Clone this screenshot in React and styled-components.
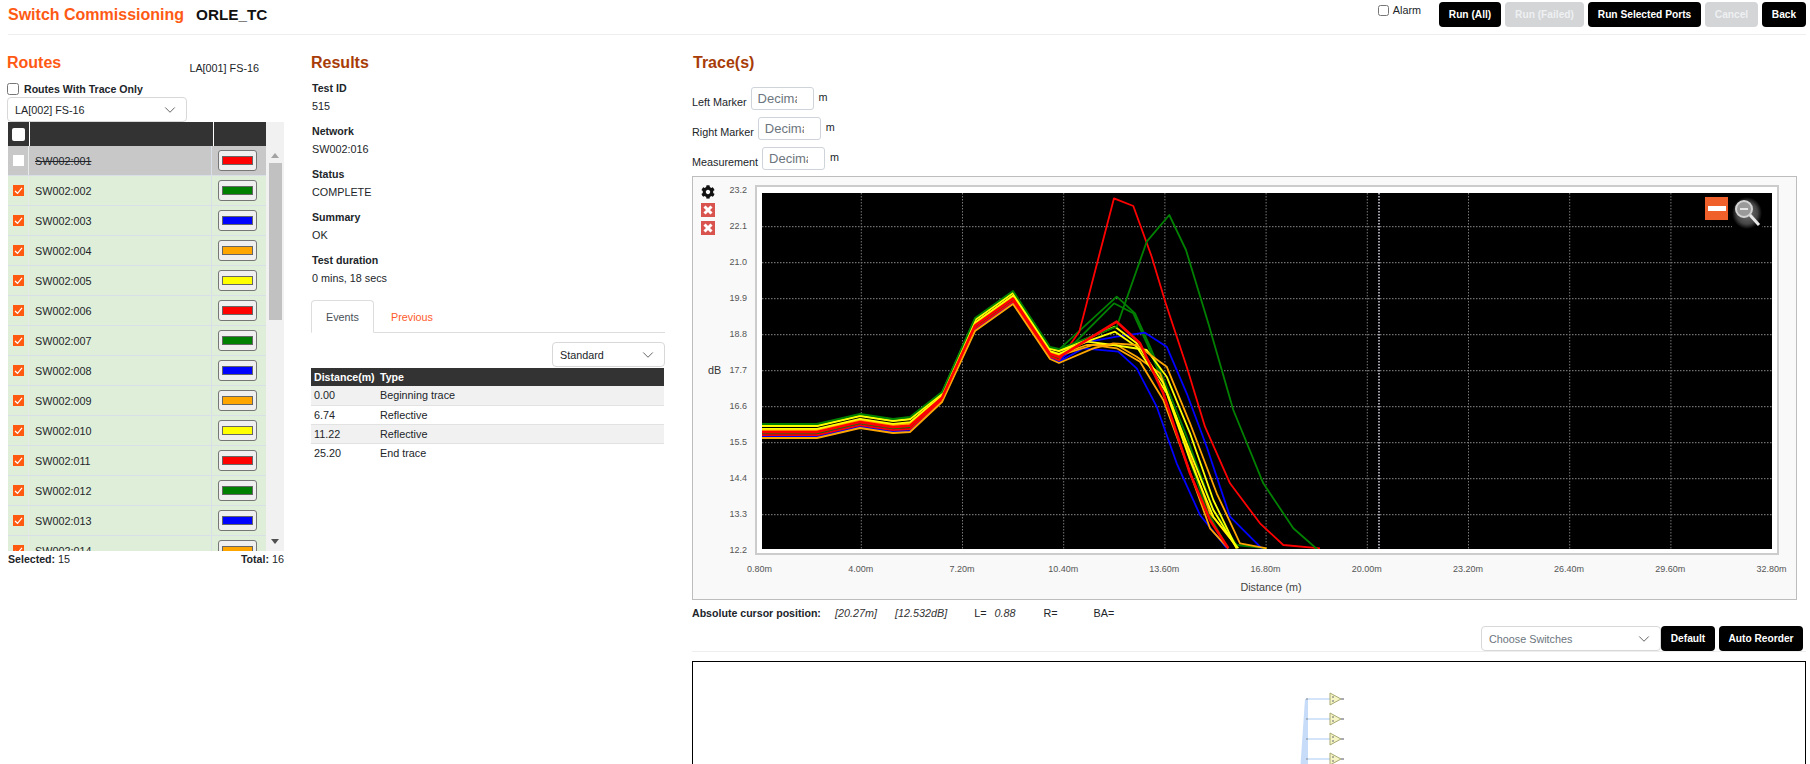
import React from 'react'
import styled, { createGlobalStyle } from 'styled-components'
import { ChevronDown } from 'lucide-react'
import { FaCog } from 'react-icons/fa'

const GlobalStyle = createGlobalStyle`
  html, body {
    margin: 0;
    height: 100%;
    overflow: hidden;
    background: #fff;
  }
  body {
    font-family: "Liberation Sans", Arial, sans-serif;
    font-size: 10.8px;
    color: #212529;
  }
  * {
    box-sizing: border-box;
  }
`

const COLORS = ['#ff0000', '#008000', '#0000ff', '#ffa500', '#ffff00']

const routes = Array.from({ length: 14 }, (_, idx) => ({
  name: `SW002:${String(idx + 1).padStart(3, '0')}`,
  color: COLORS[idx % 5],
  off: idx === 0,
}))

const results = [
  ['Test ID', '515'],
  ['Network', 'SW002:016'],
  ['Status', 'COMPLETE'],
  ['Summary', 'OK'],
  ['Test duration', '0 mins, 18 secs'],
]

const events = [
  ['0.00', 'Beginning trace'],
  ['6.74', 'Reflective'],
  ['11.22', 'Reflective'],
  ['25.20', 'End trace'],
]

const Y_TICKS = ['23.2', '22.1', '21.0', '19.9', '18.8', '17.7', '16.6', '15.5', '14.4', '13.3', '12.2']
const X_TICKS = ['0.80m', '4.00m', '7.20m', '10.40m', '13.60m', '16.80m', '20.00m', '23.20m', '26.40m', '29.60m', '32.80m']

// shared first part of every trace: x, lowest y, highest y (plot coordinates)
const HEAD = [
  [0, 245, 231],
  [55, 245, 231],
  [98, 235, 221],
  [131, 240, 226],
  [148, 239, 224],
  [180, 209, 199],
  [213, 138, 125],
  [251, 111, 98],
  [288, 166, 154],
  [297, 170, 156],
]

const traces = [
  { color: '#008000', lift: 0.95, width: 1.8, tail: [[470, 350], [525, 400], [570, 500], [620, 620], [680, 770], [760, 990], [830, 1095], [920, 1105]] },
  { color: '#008000', lift: 0.32, width: 1.8, tail: [[462, 370], [520, 400], [565, 500], [610, 610], [660, 750], [740, 990], [800, 1100]] },
  { color: '#0000ff', lift: 0.18, width: 1.8, tail: [[360, 490], [470, 470], [555, 458], [620, 500], [680, 640], [740, 800], [810, 1010], [905, 1105]] },
  { color: '#0000ff', lift: 0.08, width: 1.8, tail: [[370, 505], [475, 515], [530, 565], [590, 680], [650, 850], [720, 1005], [800, 1105]] },
  { color: '#ff0000', lift: 0.2, width: 1.8, tail: [[358, 455], [462, 55], [520, 78], [575, 230], [617, 370], [680, 560], [735, 740], [810, 910], [900, 1030], [970, 1095], [1080, 1105]] },
  { color: '#ffa500', lift: 0.52, width: 1.8, tail: [[400, 495], [470, 505], [540, 545], [610, 660], [680, 850], [750, 1045], [805, 1105]] },
  { color: '#ffa500', lift: 0.6, width: 1.8, tail: [[380, 495], [470, 495], [530, 530], [600, 580], [670, 770], [750, 1000], [830, 1100]] },
  { color: '#ffff00', lift: 0.88, width: 1.8, tail: [[465, 440], [530, 490], [610, 610], [680, 790], [760, 990], [830, 1105]] },
  { color: '#ffff00', lift: 0.85, width: 1.8, tail: [[465, 455], [530, 500], [620, 640], [690, 840], [760, 1010], [835, 1105]] },
  { color: '#ffff00', lift: 0.66, width: 1.8, tail: [[380, 485], [460, 495], [560, 510], [620, 590], [690, 760], [760, 960], [830, 1105]] },
  { color: '#008000', lift: 1, width: 1.8, tail: [[470, 440], [560, 185], [628, 105], [678, 210], [745, 430], [820, 690], [910, 910], [1000, 1045], [1080, 1115]] },
  { color: '#ffa500', lift: 0, width: 1.8, tail: [[400, 505], [460, 490], [530, 495], [620, 560], [690, 730], [770, 940], [840, 1090], [920, 1105]] },
  { color: '#ff0000', lift: 0.42, width: 2.6, tail: [[470, 425], [540, 490], [610, 640], [690, 880], [750, 1020], [805, 1105]] },
]

const tracePoints = ({ lift, tail }) => {
  const head = HEAD.map(([x, low, high]) => `${x},${(low + (high - low) * lift).toFixed(1)}`)
  // tail values were read off a 3x crop of the plot
  const rest = tail.map(([x, y]) => `${(x / 3 + 198).toFixed(1)},${(y / 3 - 13).toFixed(1)}`)
  return [...head, ...rest].join(' ')
}

const Page = styled.div`
  width: 1810px;
  height: 764px;
  overflow: hidden;
`

const Header = styled.header`
  display: flex;
  justify-content: space-between;
  align-items: flex-start;
  height: 35px;
  margin: 0 4px 0 8px;
  border-bottom: 1px solid #eeeeee;
`

const TitleGroup = styled.div`
  display: flex;
  align-items: center;
  gap: 12px;
  height: 30px;
`

const Title = styled.h1`
  margin: 0;
  font-size: ${props => props.$accent ? 16 : 15.3}px;
  font-weight: 700;
  color: ${props => props.$accent ? '#ff5a14' : '#111'};
`

const Actions = styled.div`
  display: flex;
  align-items: flex-start;
  gap: 4px;
  padding-top: 2px;
`

const AlarmLabel = styled.label`
  display: flex;
  align-items: center;
  gap: 4px;
  margin-right: 14px;
  height: 16px;
`

const Check = styled.input.attrs({ type: 'checkbox', readOnly: true })`
  width: ${props => props.$size || 12}px;
  height: ${props => props.$size || 12}px;
  margin: 0;
`

const Button = styled.button`
  width: ${props => props.$width}px;
  height: 25px;
  padding: 0;
  border: 0;
  border-radius: 4px;
  font-family: inherit;
  font-size: 10.2px;
  font-weight: 700;
  color: ${props => props.disabled ? '#eef0f2' : '#fff'};
  background: ${props => props.disabled ? '#d3d5d7' : '#000'};
`

const Columns = styled.main`
  display: grid;
  grid-template-columns: 278px 355px 1114px;
  column-gap: 26px;
  padding: 17px 0 0 7px;
`

const Heading = styled.h2`
  margin: 0;
  height: 20px;
  line-height: 22px;
  font-size: 16px;
  font-weight: 700;
  color: ${props => props.$accent ? '#ff5a14' : '#a83c08'};
`

const TraceHeading = styled(Heading)`
  padding-left: 1px;
`

const RoutesTop = styled.div`
  display: flex;
  justify-content: space-between;
  align-items: flex-end;
  width: 252px;
`

const SmallNote = styled.span`
  line-height: 14px;
  margin-bottom: -3px;
`

const TraceOnly = styled.label`
  display: flex;
  align-items: center;
  gap: 5px;
  height: 14px;
  margin-top: 10px;
  font-size: 10.6px;
  font-weight: 700;
`

const SelectBox = styled.div`
  display: flex;
  align-items: center;
  justify-content: space-between;
  width: ${props => props.$width}px;
  height: 25px;
  padding: 0 7px;
  background: #fff;
  border: 1px solid #d8d8d8;
  border-radius: 4px;
  color: ${props => props.$muted ? '#6c757d' : '#212529'};

  svg {
    color: #444;
  }
`

const RouteSelect = styled(SelectBox)`
  margin-top: 1px;
`

const ListFrame = styled.div`
  display: flex;
  height: 429px;
  width: 277px;
  padding-left: 1px;
  overflow: hidden;
  background: #fff;
`

const RouteTable = styled.div`
  width: 258px;
  display: flex;
  flex-direction: column;
  flex-shrink: 0;
`

const RouteHead = styled.div`
  display: grid;
  grid-template-columns: 21px 183px 1fr;
  column-gap: 1px;
  height: 24px;
  flex-shrink: 0;
  background: #fff;

  > div {
    display: flex;
    align-items: center;
    justify-content: center;
    background: #333;
  }
`

const Row = styled.div`
  display: grid;
  grid-template-columns: 21px 183px 1fr;
  height: 30px;
  flex-shrink: 0;
  align-items: center;
  background: ${props => props.$off ? '#c8c8c8' : '#dfeed8'};
  border-bottom: 1px solid #d9dfe6;
`

const BoxCell = styled.div`
  height: 100%;
  display: flex;
  align-items: center;
  justify-content: center;
  border-right: 1px solid #e6eae8;
`

const NameCell = styled.div`
  height: 100%;
  display: flex;
  align-items: center;
  padding-left: 6px;
  text-decoration: ${props => props.$off ? 'line-through' : 'none'};
  border-right: 1px solid #d9dfe6;
`

const ColorCell = styled.div`
  display: flex;
  padding-left: 6px;
`

const MarkBox = styled.span`
  display: flex;
  align-items: center;
  justify-content: center;
  width: ${props => props.$size || 11}px;
  height: ${props => props.$size || 11}px;
  border-radius: ${props => props.$size ? 2 : 0}px;
  background: ${props => props.$on ? '#ff5a10' : '#fff'};
`

const ColorButton = styled.div`
  display: flex;
  align-items: center;
  justify-content: center;
  width: 39px;
  height: 21px;
  background: #efefef;
  border: 1px solid #767676;
  border-radius: 3px;
`

const Swatch = styled.span`
  display: block;
  width: 31px;
  height: 9px;
  border: 1px solid #666;
  background: ${props => props.$color};
`

const ScrollTrack = styled.div`
  display: flex;
  flex-direction: column;
  align-items: center;
  width: 18px;
  background: #f1f1f1;
`

const Arrow = styled.span`
  width: 0;
  height: 0;
  border-left: 4px solid transparent;
  border-right: 4px solid transparent;
  ${props => props.$down
    ? 'border-top: 5px solid #505050; margin-top: auto; margin-bottom: 7px;'
    : 'border-bottom: 5px solid #a3a3a3; margin-top: 31px;'}
`

const Thumb = styled.span`
  width: 13px;
  height: 157px;
  margin-top: 5px;
  background: #c1c1c1;
`

const RouteFooter = styled.div`
  display: flex;
  justify-content: space-between;
  width: 277px;
  margin-top: 1px;
  padding-left: 1px;
  line-height: 14px;

  b {
    font-size: 10.6px;
    font-weight: 700;
  }
`

const ResultList = styled.div`
  margin-top: 7px;
  padding-left: 1px;
`

const ResultItem = styled.div`
  margin-bottom: 7px;

  b, span {
    display: block;
    height: 18px;
    line-height: 18px;
  }
  b {
    font-size: 10.6px;
    font-weight: 700;
  }
`

const Tabs = styled.div`
  display: flex;
  align-items: stretch;
  width: 354px;
  height: 33px;
  margin-top: 13px;
  border-bottom: 1px solid #ddd;
`

const Tab = styled.div`
  display: flex;
  align-items: center;
  justify-content: ${props => props.$active ? 'center' : 'flex-start'};
  width: ${props => props.$active ? '63px' : '79px'};
  height: 33px;
  padding-left: ${props => props.$active ? 0 : '17px'};
  border: ${props => props.$active ? '1px solid #ddd' : '0'};
  border-bottom: ${props => props.$active ? '1px solid #fff' : '0'};
  border-radius: 4px 4px 0 0;
  color: ${props => props.$active ? '#495057' : '#ff5a2a'};
`

const RightRow = styled.div`
  display: flex;
  justify-content: flex-end;
  width: 354px;
  margin-top: 9px;
`

const EventTable = styled.table`
  width: 353px;
  margin-top: 1px;
  border-collapse: collapse;
  table-layout: fixed;
  font-size: 10.8px;

  th {
    height: 18px;
    padding: 0 3px;
    text-align: left;
    font-size: 10.6px;
    font-weight: 700;
    white-space: nowrap;
    color: #fff;
    background: #333;
  }
  th:first-child {
    width: 66px;
  }
  td {
    height: 19px;
    padding: 0 3px;
    border-bottom: 1px solid #e2e2e2;
  }
  tr:nth-child(odd) td {
    background: #f1f1f1;
  }
  tr:last-child td {
    border-bottom: 0;
  }
`

const MarkerRow = styled.div`
  display: flex;
  align-items: center;
  gap: 4px;
  height: 23px;
  margin-top: ${props => props.$first ? 15 : 7}px;

  > span:first-child {
    padding-top: 7px;
  }
  > span:last-child {
    padding-bottom: 4px;
    margin-left: 1px;
  }
`

const MarkerInput = styled.input`
  width: 63px;
  height: 23px;
  padding: 0 16px 0 6px;
  border: 1px solid #ced4da;
  border-radius: 3px;
  font-family: inherit;
  font-size: 13px;
  outline: none;

  &::placeholder {
    color: #6c757d;
  }
`

const ChartPanel = styled.section`
  display: grid;
  grid-template-columns: 62px 1024px;
  grid-template-rows: 370px auto auto;
  width: 1105px;
  height: 424px;
  margin-top: 6px;
  padding-top: 8px;
  background: #f9f9f9;
  border: 1px solid #bdbdbd;
`

const ChartLeft = styled.div`
  display: flex;
`

const ToolCol = styled.div`
  display: flex;
  flex-direction: column;
  width: 15px;
  padding-left: 8px;
  gap: 4px;
  flex-shrink: 0;

  svg {
    display: block;
    flex-shrink: 0;
  }
`

const AxisY = styled.div`
  align-self: center;
  width: 14px;
  color: #333;
`

const Ticks = styled.div`
  display: flex;
  flex-direction: column;
  justify-content: space-between;
  align-items: flex-end;
  width: 24px;
  margin-left: auto;
  margin-right: 8px;
  font-size: 9px;
  line-height: 10px;
  color: #555;
`

const PlotFrame = styled.div`
  position: relative;
  padding: 6px 5px 4px;
  background: #fff;
  border: 2px solid #ccc;
`

const PlotSvg = styled.svg`
  display: block;
  width: 1010px;
  height: 356px;
  background: #000;
`

const ZoomTools = styled.div`
  position: absolute;
  top: 10px;
  right: 15px;
  display: flex;
  align-items: flex-start;
  gap: 4px;
`

const ZoomMinus = styled.div`
  display: flex;
  align-items: center;
  justify-content: center;
  width: 23px;
  height: 23px;
  background: #f0602a;

  &::after {
    content: '';
    width: 18px;
    height: 5px;
    background: #fff;
  }
`

const XTicks = styled.div`
  grid-column: 2;
  display: flex;
  margin: 8px 0 0 -46px;
  font-size: 9px;
  line-height: 12px;
  color: #555;

  span {
    width: 101.2px;
    flex-shrink: 0;
    text-align: center;
  }
`

const XTitle = styled.div`
  grid-column: 2;
  padding-left: 8px;
  text-align: center;
  line-height: 14px;
  color: #444;
`

const CursorRow = styled.div`
  display: flex;
  align-items: center;
  height: 26px;

  b {
    font-size: 10.6px;
    font-weight: 700;
    margin-right: 14px;
  }
  i {
    color: #333;
  }
`

const CursorGap = styled.span`
  margin-left: ${props => props.$gap}px;
`

const DiagramTools = styled.div`
  display: flex;
  justify-content: flex-end;
  gap: 4px;
  height: 26px;
  padding-right: 3px;
  border-bottom: 1px solid #eeeeee;
`

const FlushButton = styled(Button)`
  margin-left: -4px;
`

const DiagramBox = styled.div`
  height: 300px;
  margin-top: 9px;
  background: #fff;
  border: 1px solid #000;

  svg {
    display: block;
  }
`

const Xmark = () => (
  <svg width="14" height="14" viewBox="0 0 14 14">
    <rect width="14" height="14" fill="#d9534f" />
    <path d="M3.5 3.5 L10.5 10.5 M10.5 3.5 L3.5 10.5" stroke="#fff" strokeWidth="3" />
  </svg>
)

const Tick = () => (
  <svg width="9" height="9" viewBox="0 0 9 9">
    <path d="M1 5 L3.5 7.3 L8 1.8" stroke="#fff" strokeWidth="1.2" fill="none" />
  </svg>
)

const Magnifier = () => (
  <svg width="30" height="32" viewBox="0 0 30 32">
    <defs>
      <radialGradient id="glow">
        <stop offset="0%" stopColor="#777" />
        <stop offset="70%" stopColor="#444" />
        <stop offset="100%" stopColor="#000" />
      </radialGradient>
    </defs>
    <rect width="30" height="32" fill="url(#glow)" />
    <circle cx="12" cy="12" r="8" fill="#9a9a9a" stroke="#d4d4d4" strokeWidth="2" />
    <rect x="8" y="11" width="8" height="2" fill="#e4e4e4" />
    <path d="M18 18 L27 28" stroke="#e8e8e8" strokeWidth="3" />
  </svg>
)

const Plot = () => (
  <PlotSvg viewBox="0 0 1010 356">
    {Y_TICKS.slice(1, -1).map((_, idx) => (
      <line key={idx} x1="0" x2="1010" y1={33.7 + idx * 36} y2={33.7 + idx * 36} stroke="#8c8c8c" strokeDasharray="1.5 1.5" />
    ))}
    {X_TICKS.slice(1, -1).map((_, idx) => (
      <line key={idx} x1={99.3 + idx * 101.2} x2={99.3 + idx * 101.2} y1="0" y2="356" stroke="#777" strokeDasharray="1.5 1.5" />
    ))}
    <line x1="617" x2="617" y1="0" y2="356" stroke="#e6e6f2" strokeWidth="1.4" strokeDasharray="1.5 1.5" />
    {traces.map((trace, idx) => (
      <polyline key={idx} points={tracePoints(trace)} fill="none" stroke={trace.color} strokeWidth={trace.width} strokeLinejoin="round" />
    ))}
  </PlotSvg>
)

const SwitchTree = () => {
  const rows = [37, 57, 77, 97]
  return (
    <svg width="1111" height="298" viewBox="0 0 1111 298">
      <polygon points="612,37 615,37 615,110 607,110" fill="#c6dcf8" />
      {rows.map(y => (
        <g key={y}>
          <line x1="614" x2="637" y1={y} y2={y} stroke="#c6dcf8" strokeWidth="1.5" />
          <circle cx="614" cy={y} r="1" fill="#9aa6b4" />
          <polygon points={`637,${y - 6} 648,${y} 637,${y + 6}`} fill="#f4f4c4" stroke="#a9aa74" />
          <circle cx="640" cy={y - 2} r="0.8" fill="#556" />
          <circle cx="640" cy={y + 2} r="0.8" fill="#556" />
          <line x1="648" x2="651" y1={y} y2={y} stroke="#556" />
        </g>
      ))}
    </svg>
  )
}

const App = () => {
  return (
    <Page>
      <GlobalStyle />
      <Header>
        <TitleGroup>
          <Title $accent>Switch Commissioning</Title>
          <Title>ORLE_TC</Title>
        </TitleGroup>
        <Actions>
          <AlarmLabel>
            <Check $size={11} />
            Alarm
          </AlarmLabel>
          <Button type="button" $width={62}>Run (All)</Button>
          <Button type="button" $width={79} disabled>Run (Failed)</Button>
          <Button type="button" $width={113}>Run Selected Ports</Button>
          <Button type="button" $width={53} disabled>Cancel</Button>
          <Button type="button" $width={44}>Back</Button>
        </Actions>
      </Header>

      <Columns>
        <section>
          <RoutesTop>
            <Heading $accent>Routes</Heading>
            <SmallNote>LA[001] FS-16</SmallNote>
          </RoutesTop>
          <TraceOnly>
            <Check />
            Routes With Trace Only
          </TraceOnly>
          <RouteSelect $width={180}>
            LA[002] FS-16
            <ChevronDown size={18} strokeWidth={1.1} />
          </RouteSelect>
          <ListFrame>
            <RouteTable>
              <RouteHead>
                <div><MarkBox $size={13} /></div>
                <div />
                <div />
              </RouteHead>
              {routes.map(route => (
                <Row key={route.name} $off={route.off}>
                  <BoxCell>
                    <MarkBox $on={!route.off}>{!route.off && <Tick />}</MarkBox>
                  </BoxCell>
                  <NameCell $off={route.off}>{route.name}</NameCell>
                  <ColorCell>
                    <ColorButton><Swatch $color={route.color} /></ColorButton>
                  </ColorCell>
                </Row>
              ))}
            </RouteTable>
            <ScrollTrack>
              <Arrow />
              <Thumb />
              <Arrow $down />
            </ScrollTrack>
          </ListFrame>
          <RouteFooter>
            <span><b>Selected:</b> 15</span>
            <span><b>Total:</b> 16</span>
          </RouteFooter>
        </section>

        <section>
          <Heading>Results</Heading>
          <ResultList>
            {results.map(([label, value]) => (
              <ResultItem key={label}>
                <b>{label}</b>
                <span>{value}</span>
              </ResultItem>
            ))}
          </ResultList>
          <Tabs>
            <Tab $active>Events</Tab>
            <Tab>Previous</Tab>
          </Tabs>
          <RightRow>
            <SelectBox $width={113}>
              Standard
              <ChevronDown size={18} strokeWidth={1.1} />
            </SelectBox>
          </RightRow>
          <EventTable>
            <thead>
              <tr><th>Distance(m)</th><th>Type</th></tr>
            </thead>
            <tbody>
              {events.map(([distance, type]) => (
                <tr key={distance}><td>{distance}</td><td>{type}</td></tr>
              ))}
            </tbody>
          </EventTable>
        </section>

        <section>
          <TraceHeading>Trace(s)</TraceHeading>
          <MarkerRow $first>
            <span>Left Marker</span>
            <MarkerInput placeholder="Decimal" />
            <span>m</span>
          </MarkerRow>
          <MarkerRow>
            <span>Right Marker</span>
            <MarkerInput placeholder="Decimal" />
            <span>m</span>
          </MarkerRow>
          <MarkerRow>
            <span>Measurement</span>
            <MarkerInput placeholder="Decimal" />
            <span>m</span>
          </MarkerRow>

          <ChartPanel>
            <ChartLeft>
              <ToolCol>
                <FaCog size={14} color="#111" />
                <Xmark />
                <Xmark />
              </ToolCol>
              <AxisY>dB</AxisY>
              <Ticks>
                {Y_TICKS.map(tick => <span key={tick}>{tick}</span>)}
              </Ticks>
            </ChartLeft>
            <PlotFrame>
              <Plot />
              <ZoomTools>
                <ZoomMinus />
                <Magnifier />
              </ZoomTools>
            </PlotFrame>
            <XTicks>
              {X_TICKS.map(tick => <span key={tick}>{tick}</span>)}
            </XTicks>
            <XTitle>Distance (m)</XTitle>
          </ChartPanel>

          <CursorRow>
            <b>Absolute cursor position:</b>
            <i>[20.27m]</i>
            <CursorGap $gap={18}><i>[12.532dB]</i></CursorGap>
            <CursorGap $gap={27}>L=</CursorGap>
            <CursorGap $gap={8}><i>0.88</i></CursorGap>
            <CursorGap $gap={28}>R=</CursorGap>
            <CursorGap $gap={36}>BA=</CursorGap>
          </CursorRow>

          <DiagramTools>
            <SelectBox $width={180} $muted>
              Choose Switches
              <ChevronDown size={18} strokeWidth={1.1} />
            </SelectBox>
            <FlushButton type="button" $width={54}>Default</FlushButton>
            <Button type="button" $width={84}>Auto Reorder</Button>
          </DiagramTools>

          <DiagramBox>
            <SwitchTree />
          </DiagramBox>
        </section>
      </Columns>
    </Page>
  )
}

export default App
